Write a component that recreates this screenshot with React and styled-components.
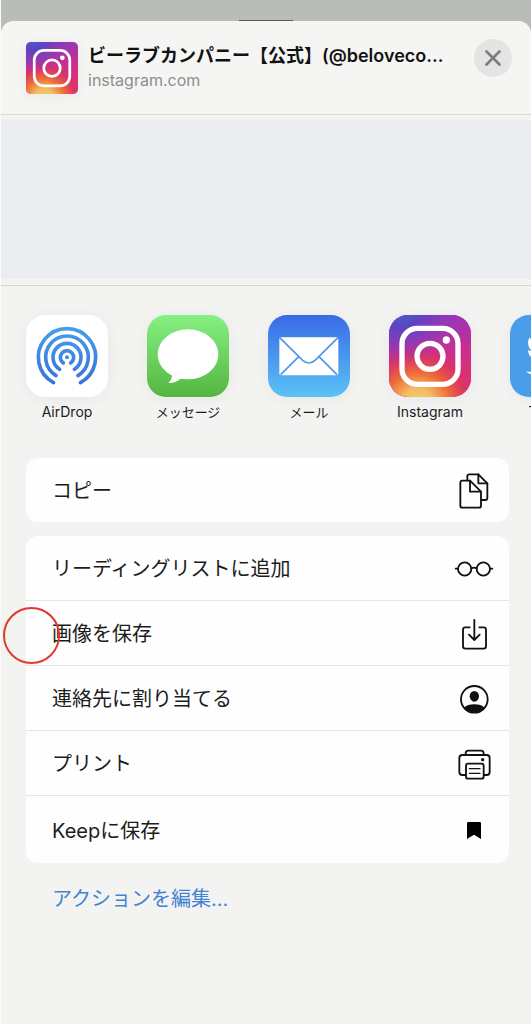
import React from 'react'
import styled, { createGlobalStyle } from 'styled-components'
import { FaTwitter } from 'react-icons/fa'

const GlobalStyle = createGlobalStyle`
    *{
        box-sizing:border-box;
    }
    body{
        margin:0;
        background-color:#babcb9;
        font-family:Inter, "Noto Sans CJK JP", sans-serif;
        color:#1c1c1c;
    }
    button{
        font:inherit;
        color:inherit;
        border:none;
        padding:0;
        background:none;
        cursor:pointer;
    }
`

const Page = styled.div`
    min-height:100vh;
    display:flex;
    flex-direction:column;
    border-left:1px solid #fafafa;
`
const Backdrop = styled.div`
    height:21px;
    display:flex;
    justify-content:center;
    align-items:flex-end;
`
const Handle = styled.div`
    width:54px;
    height:1px;
    background-color:#595b58;
`
const Sheet = styled.main`
    flex:1;
    background-color:#f3f3f2;
    border-radius:13px 13px 0 0;
`

const Header = styled.header`
    display:flex;
    align-items:flex-start;
    padding:18px 19px 20px 25px;
    border-bottom:1px solid #d8d9d4;
    background-color:#f5f5f3;
    border-radius:13px 13px 0 0;
`
const Thumb = styled.div`
    width:52px;
    height:52px;
    margin-top:3px;
    border-radius:5px;
    overflow:hidden;
    flex-shrink:0;
    box-shadow:0 2px 14px rgba(0,0,0,0.06);
`
const Info = styled.div`
    flex:1;
    min-width:0;
    margin:4px 16px 0 10px;
`
const Title = styled.h1`
    margin:0;
    font-size:18px;
    line-height:26px;
    font-weight:600;
    color:#111;
    white-space:nowrap;
`
const Domain = styled.p`
    margin:0;
    font-size:16px;
    line-height:22px;
    color:#8e8e8e;
`
const Close = styled.button`
    width:38px;
    height:38px;
    flex-shrink:0;
    border-radius:50%;
    background-color:#e4e4e3;
    display:flex;
    align-items:center;
    justify-content:center;
`
const Preview = styled.div`
    height:159px;
    margin:5px 0 6px;
    background-color:#ecedf0;
`

const Apps = styled.nav`
    display:flex;
    gap:39px;
    padding:29px 0 36px 25px;
    border-top:1px solid #d3d3d1;
    overflow:hidden;
`
const AppButton = styled.button`
    width:82px;
    flex-shrink:0;
    display:flex;
    flex-direction:column;
    align-items:center;
`
const AppIcon = styled.span`
    width:82px;
    height:82px;
    border-radius:19px;
    overflow:hidden;
    display:flex;
    align-items:center;
    justify-content:center;
    color:white;
    background:${props => props.$bg};
    box-shadow:0 2px 16px rgba(0,0,0,0.05);
`
const AppName = styled.span`
    margin-top:5px;
    font-size:${props => props.$latin ? '14px' : '13px'};
    line-height:20px;
    white-space:nowrap;
`

const Group = styled.ul`
    list-style:none;
    margin:0 22px 14px 25px;
    padding:0;
    background-color:#fefefe;
    border-radius:12px;
`
const Item = styled.li`
    position:relative;
    border-bottom:1px solid #e5e5e5;
    &:last-child{
        border-bottom:none;
    }
`
const Action = styled.button`
    width:100%;
    height:${props => props.$tall ? '67px' : '64px'};
    padding:2px 16px 0 26px;
    display:flex;
    align-items:center;
    justify-content:space-between;
    font-size:20px;
    line-height:30px;
    text-align:left;
`
const IconBox = styled.span`
    width:38px;
    display:flex;
    justify-content:center;
    color:#111;
`
const Ring = styled.span`
    position:absolute;
    left:-23px;
    top:6px;
    width:57px;
    height:57px;
    border:2px solid #de3a2c;
    border-radius:50%;
    pointer-events:none;
`
const Edit = styled.a`
    display:inline-block;
    margin:7px 0 40px 51px;
    font-size:20px;
    line-height:30px;
    color:#4283d4;
    text-decoration:none;
`

const Line = ({ box, w, h, children }) => (
    <svg viewBox={box} width={w} height={h} fill="none" stroke="currentColor" strokeWidth="5.5" strokeLinecap="round" strokeLinejoin="round" overflow="visible" aria-hidden="true">
        {children}
    </svg>
)

const CopyIcon = () => (
    <Line box="88 69 90 108" w={30} h={36}>
        <path d="M113 91v-12a6 6 0 0 1 6-6h27l27 27v44a6 6 0 0 1-6 6h-11" />
        <path d="M146 73v27h27" />
        <path d="M121 92H98a6 6 0 0 0-6 6v69a6 6 0 0 0 6 6h50a6 6 0 0 0 6-6v-42z" />
        <path d="M121 92v33h33" />
    </Line>
)
const GlassesIcon = () => (
    <Line box="76 332 114 48" w={38} h={16}>
        <circle cx="105" cy="356" r="20" />
        <circle cx="161" cy="356" r="20" />
        <path d="M125 354q8-4 16 0M78 355h7M181 355h7" />
    </Line>
)
const SaveIcon = () => (
    <Line box="93 504 81 93" w={27} h={31}>
        <path d="M119 529h-13a7 7 0 0 0-7 7v50a7 7 0 0 0 7 7h55a7 7 0 0 0 7-7v-50a7 7 0 0 0-7-7h-13" />
        <path d="M133 507v59M117 551l16 16 16-16" />
    </Line>
)
const ContactIcon = () => (
    <Line box="90 75 87 87" w={29} h={29}>
        <circle cx="133" cy="118" r="40" />
        <ellipse cx="133" cy="109" rx="14" ry="16" fill="currentColor" stroke="none" />
        <path d="M103 143q9-10 30-10t30 10a40 40 0 0 1-60 0z" fill="currentColor" stroke="none" />
    </Line>
)
const PrintIcon = () => (
    <Line box="84 266 99 93" w={33} h={31}>
        <path d="M107 283v-4a8 8 0 0 1 8-8h38a8 8 0 0 1 8 8v4" />
        <rect x="88" y="284" width="91" height="60" rx="9" />
        <rect x="108" y="310" width="53" height="45" rx="6" fill="#fefefe" />
        <path d="M118 325h32M118 339h32" strokeWidth="4" />
        <circle cx="158" cy="298" r="5" fill="currentColor" stroke="none" />
    </Line>
)
const BookmarkIcon = () => (
    <svg viewBox="113 485 42 51" width="14" height="17" fill="#000" aria-hidden="true">
        <path d="M117 485h34a4 4 0 0 1 4 4v47l-21-13-21 13v-47a4 4 0 0 1 4-4z" />
    </svg>
)

// arc that is open at the bottom, deg is half of the opening
const arc = (r, deg) => {
    const a = deg * Math.PI / 180
    const x = r * Math.sin(a)
    const y = 127 + r * Math.cos(a)
    return `M${123 - x} ${y}A${r} ${r} 0 1 1 ${123 + x} ${y}`
}
const AirDropIcon = () => (
    <svg viewBox="0 0 246 246" width="82" height="82" aria-hidden="true">
        <defs>
            <linearGradient id="air" gradientUnits="userSpaceOnUse" x1="0" y1="36" x2="0" y2="206">
                <stop offset="0" stopColor="#479fe8" />
                <stop offset="1" stopColor="#3873dc" />
            </linearGradient>
        </defs>
        <g fill="none" stroke="url(#air)" strokeWidth="11" strokeLinecap="round">
            <path d={arc(86, 28)} />
            <path d={arc(64, 31)} />
            <path d={arc(42, 32)} />
            <path d={arc(20, 34)} />
        </g>
        <circle cx="123" cy="127" r="6" fill="#3f8be3" />
    </svg>
)
const MessageIcon = () => (
    <svg viewBox="0 0 246 246" width="82" height="82" fill="#fff" aria-hidden="true">
        <ellipse cx="123" cy="118" rx="91" ry="75" />
        <path d="M72 172c6 12 2 23-8 32 14 1 28-4 40-16z" />
    </svg>
)
const MailIcon = () => (
    <svg viewBox="0 0 246 246" width="82" height="82" aria-hidden="true">
        <rect x="34" y="67" width="177" height="114" rx="6" fill="#fff" />
        <g fill="none" stroke="#4c97ea" strokeWidth="5">
            <path d="M35 68l69 68q18 16 37 0l69-68" />
            <path d="M92 125l-54 54M153 125l54 54" />
        </g>
    </svg>
)
const InstagramIcon = ({ id, size, stroke }) => (
    <svg viewBox="0 0 246 246" width={size} height={size} aria-hidden="true">
        <defs>
            <linearGradient id={id + 'a'} x1="0.6" y1="0" x2="0.8" y2="1">
                <stop offset="0" stopColor="#8f38bd" />
                <stop offset="0.45" stopColor="#c92e92" />
                <stop offset="0.8" stopColor="#e0316b" />
                <stop offset="1" stopColor="#d63a72" />
            </linearGradient>
            <radialGradient id={id + 'b'} cx="0.35" cy="1.1" r="0.8">
                <stop offset="0" stopColor="#f7d275" />
                <stop offset="0.25" stopColor="#f4bb62" />
                <stop offset="0.5" stopColor="#ed6c35" />
                <stop offset="0.75" stopColor="#dc3560" stopOpacity="0.75" />
                <stop offset="1" stopColor="#c72f8d" stopOpacity="0" />
            </radialGradient>
            <radialGradient id={id + 'c'} cx="0.15" cy="-0.1" r="0.7">
                <stop offset="0" stopColor="#4169d4" />
                <stop offset="0.35" stopColor="#5546c2" stopOpacity="0.9" />
                <stop offset="1" stopColor="#8f38bd" stopOpacity="0" />
            </radialGradient>
        </defs>
        <rect width="246" height="246" fill={`url(#${id}a)`} />
        <rect width="246" height="246" fill={`url(#${id}b)`} />
        <rect width="246" height="246" fill={`url(#${id}c)`} />
        <g fill="none" stroke="#fff" strokeWidth={stroke}>
            <rect x="39" y="40" width="168" height="168" rx="46" />
            <circle cx="123" cy="124" r="39" />
        </g>
        <circle cx="172" cy="75" r="11" fill="#fff" />
    </svg>
)

const apps = [
    { name: 'AirDrop', latin: true, bg: '#fff', icon: <AirDropIcon /> },
    { name: 'メッセージ', bg: 'linear-gradient(#86f082, #53b640)', icon: <MessageIcon /> },
    { name: 'メール', bg: 'linear-gradient(#386be6, #5bc2f6)', icon: <MailIcon /> },
    { name: 'Instagram', latin: true, bg: '#c92e92', icon: <InstagramIcon id="app" size={82} stroke={16} /> },
    { name: 'Twitter', latin: true, bg: '#4a9de8', icon: <FaTwitter size={50} /> },
]

const actions = [
    { name: 'リーディングリストに追加', icon: <GlassesIcon /> },
    { name: '画像を保存', icon: <SaveIcon />, marked: true },
    { name: '連絡先に割り当てる', icon: <ContactIcon /> },
    { name: 'プリント', icon: <PrintIcon /> },
    { name: 'Keepに保存', icon: <BookmarkIcon />, tall: true },
]

const App = () => {
  return (
    <Page>
        <GlobalStyle/>
        <Backdrop>
            <Handle/>
        </Backdrop>
        <Sheet>
            <Header>
                <Thumb>
                    <InstagramIcon id="thumb" size={52} stroke={13}/>
                </Thumb>
                <Info>
                    <Title>ビーラブカンパニー【公式】(@beloveco...</Title>
                    <Domain>instagram.com</Domain>
                </Info>
                <Close aria-label="閉じる">
                    <svg viewBox="0 0 16 16" width="16" height="16" stroke="#7c7c7c" strokeWidth="2.6" strokeLinecap="round" aria-hidden="true">
                        <path d="M1.5 1.5l13 13M14.5 1.5l-13 13"/>
                    </svg>
                </Close>
            </Header>
            <Preview/>
            <Apps>
                {apps.map(app => (
                    <AppButton key={app.name}>
                        <AppIcon $bg={app.bg}>{app.icon}</AppIcon>
                        <AppName $latin={app.latin}>{app.name}</AppName>
                    </AppButton>
                ))}
            </Apps>
            <Group>
                <Item>
                    <Action>
                        コピー
                        <IconBox><CopyIcon/></IconBox>
                    </Action>
                </Item>
            </Group>
            <Group>
                {actions.map(action => (
                    <Item key={action.name}>
                        <Action $tall={action.tall}>
                            {action.name}
                            <IconBox>{action.icon}</IconBox>
                        </Action>
                        {action.marked && <Ring/>}
                    </Item>
                ))}
            </Group>
            <Edit href="#">アクションを編集...</Edit>
        </Sheet>
    </Page>
  )
}

export default App
